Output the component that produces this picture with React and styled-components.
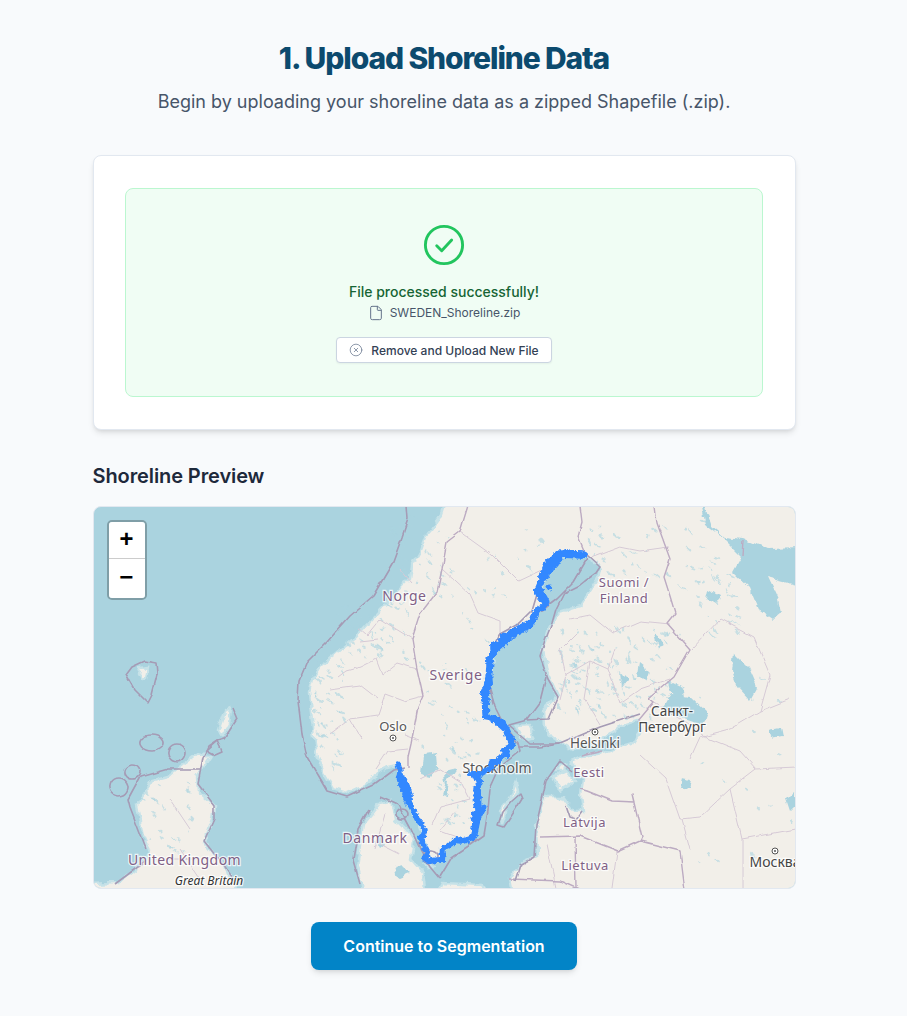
import React from 'react';
import styled, { createGlobalStyle } from 'styled-components';
import { CircleX, File } from 'lucide-react';

const GlobalStyle = createGlobalStyle`
  html, body {
    margin: 0;
    padding: 0;
    background: #f8fafc;
  }
  * { box-sizing: border-box; }
`;

const Page = styled.main`
  width: 888px;
  height: 1016px;
  overflow: hidden;
  padding-top: 40px;
  display: flex;
  flex-direction: column;
  align-items: center;
  font-family: Inter, "Liberation Sans", sans-serif;
`;

const Title = styled.h1`
  margin: 0;
  font-size: 30px;
  line-height: 36px;
  font-weight: 800;
  letter-spacing: -1.12px;
  color: #0c4a6e;
`;

const Subtitle = styled.p`
  margin: 12px 0 0;
  font-size: 18px;
  line-height: 28px;
  color: #475569;
`;

const Content = styled.div`
  width: 703px;
  margin-top: 39px;
`;

const Card = styled.section`
  height: 275px;
  padding: 32px 31.5px;
  background: #fff;
  border: 1px solid #e2e8f0;
  border-radius: 8px;
  box-shadow: 0 4px 6px -1px rgba(0, 0, 0, 0.1), 0 2px 4px -2px rgba(0, 0, 0, 0.1);
`;

const SuccessBox = styled.div`
  height: 209px;
  display: flex;
  flex-direction: column;
  align-items: center;
  padding-top: 33px;
  background: #f0fdf4;
  border: 1px solid #bbf7d0;
  border-radius: 8px;
`;

const SuccessIcon = styled.svg`
  display: block;
  width: 46px;
  height: 46px;
  fill: none;
  stroke: #22c55e;
  stroke-width: 1.5;
  stroke-linecap: round;
  stroke-linejoin: round;
`;

const SuccessText = styled.p`
  margin: 14px 0 0;
  font-size: 14px;
  line-height: 20px;
  font-weight: 500;
  color: #166534;
`;

const FileRow = styled.div`
  display: flex;
  align-items: center;
  gap: 6px;
  margin-top: 3px;
  font-size: 12px;
  line-height: 16px;
  color: #475569;
`;

const FileIcon = styled(File)`
  color: #64748b;
`;

const RemoveButton = styled.button`
  display: flex;
  align-items: center;
  gap: 8px;
  height: 26px;
  margin-top: 16px;
  padding: 0 12px;
  background: #fff;
  border: 1px solid #cbd5e1;
  border-radius: 4px;
  box-shadow: 0 1px 2px rgba(0, 0, 0, 0.05);
  font-family: inherit;
  font-size: 12px;
  font-weight: 500;
  color: #334155;
`;

const RemoveIcon = styled(CircleX)`
  color: #64748b;
`;

const SectionTitle = styled.h2`
  margin: 32px 0 16px;
  font-size: 20px;
  line-height: 28px;
  font-weight: 600;
  letter-spacing: -0.1px;
  color: #1e293b;
`;

const MapFrame = styled.div`
  position: relative;
  height: 383px;
  overflow: hidden;
  background: #aad3df;
  border: 1px solid #e2e8f0;
  border-radius: 8px;
`;

const MapArt = styled.svg`
  display: block;
  width: 100%;
  height: 100%;
`;

const ZoomControl = styled.div`
  position: absolute;
  top: 13px;
  left: 13px;
  display: flex;
  flex-direction: column;
  width: 40px;
  border: 2px solid rgba(0, 0, 0, 0.25);
  border-radius: 5px;
  background-clip: padding-box;
`;

const ZoomButton = styled.span`
  display: flex;
  align-items: center;
  justify-content: center;
  height: ${p => (p.$top ? 37 : 39)}px;
  background: #fff;
  border-bottom: ${p => (p.$top ? '1px solid #ccc' : 'none')};
  border-radius: ${p => (p.$top ? '3px 3px 0 0' : '0 0 3px 3px')};
  font-family: "Liberation Mono", monospace;
  font-size: 24px;
  font-weight: 700;
  color: #000;
`;

const Footer = styled.div`
  display: flex;
  justify-content: center;
  margin-top: 33px;
`;

const ContinueButton = styled.button`
  width: 266px;
  height: 48px;
  background: #0284c7;
  border: none;
  border-radius: 8px;
  box-shadow: 0 4px 6px -1px rgba(0, 0, 0, 0.1), 0 2px 4px -2px rgba(0, 0, 0, 0.1);
  font-family: inherit;
  font-size: 16px;
  font-weight: 600;
  color: #fff;
`;

const MapLabel = styled.text`
  font-family: "Noto Sans", "Open Sans", sans-serif;
  font-size: ${p => p.$size || 13}px;
  font-style: ${p => (p.$italic ? 'italic' : 'normal')};
  letter-spacing: ${p => p.$spacing || 0}px;
  text-anchor: middle;
  fill: ${p => p.$color || '#7f5f85'};
  stroke: rgba(255, 255, 255, 0.75);
  stroke-width: 2.5px;
  paint-order: stroke;
`;

const WATER = '#aad3df';
const LAND = '#f2efe9';
const FRINGE = '#c6e2e8';
const MARITIME = '#a59bb5';
const BORDER = '#bcabc2';
const ADMIN = '#d6cad6';
const ROUTE = '#3388ff';

const mainland =
  'M452 480 L440 518 L432 530 L425 538 L420 552 L412 566 L410 580 L396 594 L382 610 L370 622 L357 637 L338 652 L320 667 L312 680 L309 692 L310 705 L312 722 L314 738 L318 758 L325 776 L333 790 L347 794 L360 788 L372 779 L388 768 L397 766 L402 782 L408 800 L418 822 L424 840 L428 860 L440 860 L444 848 L462 841 L473 838 L478 812 L476 795 L480 778 L492 768 L506 754 L511 744 L505 730 L497 722 L486 716 L484 696 L490 678 L492 656 L505 640 L528 628 L540 608 L541 590 L548 570 L560 556 L587 558 L600 566 L597 580 L580 607 L560 613 L548 632 L543 650 L547 673 L558 697 L543 712 L544 728 L552 738 L573 751 L596 744 L620 728 L637 722 L642 730 L632 745 L603 754 L582 757 L570 762 L584 780 L582 796 L584 812 L573 812 L563 798 L543 798 L537 828 L538 858 L520 866 L510 880 L518 920 L840 920 L840 480 Z';

const whiteSea =
  'M696 480 L712 528 L724 538 L744 540 L768 550 L840 548 L840 596 L768 578 L778 600 L781 614 L772 622 L760 614 L750 590 L733 574 L742 558 L722 538 L706 526 Z';

const islands = [
  // Denmark
  'M381 804 L392 802 L396 820 L408 832 L414 842 L411 860 L423 874 L428 920 L368 920 L357 868 L360 846 L363 826 Z',
  // Scotland and northern England
  'M197 755 L210 758 L197 778 L198 792 L214 806 L212 820 L204 842 L220 862 L236 885 L240 920 L60 920 L60 886 L118 884 L146 862 L149 852 L143 838 L137 806 L153 782 L168 778 Z',
  // Poland
  'M424 920 L442 884 L482 886 L504 920 Z',
  // Gotland, Bornholm
  'M516 783 L510 800 L500 812 L502 824 L508 806 L518 792 Z',
  'M426 865 L431 864 L433 868 L428 869 Z',
  // Saaremaa, Hiiumaa
  'M553 778 L566 772 L574 782 L560 792 Z',
  'M558 766 L566 766 L564 772 L557 772 Z',
  // Orkney
  'M225 712 L231 708 L229 726 L222 738 L218 732 Z',
  // Faroe
  'M141 669 L148 668 L146 680 L142 682 L139 676 Z',
  // Aland
  'M517 728 L528 727 L534 738 L524 741 Z',
];

const bigLakes = [
  'M424 756 L437 754 L438 768 L430 778 L422 776 Z',
  'M447 782 L450 783 L447 797 L443 796 Z',
  'M444 773 L456 770 L452 776 L445 785 Z',
  'M670 695 L690 698 L707 714 L703 726 L684 720 L670 716 L664 706 Z',
  'M734 654 L748 668 L757 688 L750 701 L738 688 L732 672 Z',
  'M668 682 L684 690 L686 704 L672 698 Z',
  'M708 590 L720 596 L716 606 L706 600 Z',
  'M786 800 L794 792 L796 806 L790 812 Z',
  'M770 730 L780 728 L782 738 L772 740 Z',
  'M682 780 L692 782 L690 790 L680 788 Z',
  'M376 842 L382 838 L386 845 L380 850 Z',
  'M395 868 L404 866 L408 876 L398 880 Z',
  'M654 634 L660 638 L664 648 L658 650 Z',
  'M640 664 L650 672 L646 684 L638 676 Z',
  'M620 674 L628 682 L622 690 Z',
];

const maritime = [
  'M405 480 L408 520 L402 538 L393 563 L373 597 L350 617 L327 643 L307 663 L299 682 L298 702 L302 735 L307 758 L327 792 L347 798 L373 786 L393 771 L405 769',
  'M587 556 L600 568 L596 574 L585 582 L580 586 L564 594 L556 610 L552 624 L545 642 L540 658 L548 680 L558 697 L548 720 L526 721 L508 726 L530 745 L560 745 L600 728 L640 715',
  'M548 570 L538 592 L532 612 L520 624 L498 636 L492 652 L487 680 L495 708 L502 722',
  'M540 612 L556 600 L574 582 L587 560',
  'M502 722 L518 744 L520 752 L500 768 L490 790 L488 812 L484 836 L470 846 L452 858 L440 878',
  'M526 721 L540 702 L546 678 M518 748 L540 748 L560 745',
  'M572 772 L560 762 L546 782 L542 800 L536 826 L534 858 L520 866 L515 882',
  'M582 812 L576 820 L570 818 L566 806',
  'M232 708 L237 720 L224 740 L217 742 L208 748 L203 758 L198 785 L214 806 L214 820 L204 842 L220 862 L236 885',
  'M217 742 L222 752 L213 756 L206 752 Z',
  'M145 662 L156 664 L157 676 L152 696 L148 704 L134 690 L126 676 L132 668 Z',
  'M152 752 A12 8 0 1 0 151.9 752 Z',
  'M177 763 A9 9 0 1 0 176.9 763 Z',
  'M119 797 A9 9 0 1 0 118.9 797 Z',
  'M132 780 A8 7 0 1 0 131.9 780 Z',
  'M146 850 L130 808 L128 800 L140 778 L168 770 L200 770',
  'M115 885 L146 862',
  'M369 810 L358 830 L353 860 L360 885',
  'M380 798 L398 806 L410 828 L420 850 L430 868 L440 880',
  'M520 795 L512 802 L502 814 L498 826 L504 828 L512 816 L522 800 Z',
  'M430 864 A8 6 0 1 0 429.9 864 Z',
  'M402 820 A6 5 0 1 0 401.9 820 Z',
];

const borders = [
  'M653 490 L657 524 L670 560 L664 578 L670 597 L675 614 L667 624 L690 650 L674 678 L648 700 L653 704 L638 722',
  'M743 540 L742 556',
  'M582 757 L602 752 M580 790 L587 792 L612 802 L634 803 L632 795 L642 838 L640 842 L618 852 L580 837 L540 838 M640 842 L680 852 L686 900',
  'M578 490 L582 523 L578 538 L586 557',
  'M473 490 L460 533 L447 543 L442 570 L437 593 L420 615 L412 640 L417 670 L423 697 L418 708 L411 745 L408 758 L408 768',
  'M575 838 L576 889 M510 880 L560 882 L600 900',
];

const admin = [
  'M460 533 L492 556 L518 582 L548 568',
  'M442 570 L470 596 L478 614 L500 622 L500 636',
  'M412 640 L380 620 L367 636 L358 628',
  'M417 670 L397 664 L382 676 L376 660 L360 668 L346 672 L338 678',
  'M423 697 L404 702 L385 695 L378 716 L350 720 L362 740',
  'M408 750 L388 752 L376 770 M404 736 L420 742',
  'M420 780 L440 770 L462 784 L470 800 L440 808 L432 826',
  'M456 812 L440 832 L462 840',
  'M588 560 L620 548 L640 552 L668 548',
  'M570 620 L590 616 L612 634 L640 622 L670 625',
  'M576 634 L560 650 L566 676 L590 662 L608 670 L615 650',
  'M608 670 L620 704 L640 690 L670 680 M590 662 L584 700 L600 726',
  'M566 676 L560 700',
  'M692 650 L720 620 L754 638 L770 676 L760 712 L730 730 L700 738 L690 760',
  'M647 700 L680 720 L710 740 L740 752 L756 770 L730 790 L700 818 L680 820 L666 780 L640 756',
  'M760 712 L790 700 M756 770 L796 768 M730 790 L742 840 L742 889',
  'M682 820 L690 850 M742 840 L796 830',
  'M547 845 L556 889 M617 852 L612 889 M585 865 L610 870',
  'M400 570 L412 584 M360 642 L378 640 M330 690 L360 686 L378 700 M350 720 L330 735',
  'M170 800 L190 830 M150 860 L200 860 M180 850 L200 880',
  'M370 840 L400 855 M385 815 L375 850',
];

function scatter(seed, count, x, y, w, h, maxR) {
  let s = seed;
  const next = () => {
    s = (s * 16807) % 2147483647;
    return s / 2147483647;
  };
  return Array.from({ length: count }, () => ({
    cx: x + next() * w,
    cy: y + next() * h,
    rx: 0.6 + next() * maxR,
    ry: 0.5 + next() * 0.9,
    rot: 20 + next() * 50,
  }));
}

const ponds = [
  ...scatter(11, 34, 440, 530, 110, 120, 3),
  ...scatter(23, 34, 420, 660, 70, 100, 3.5),
  ...scatter(37, 130, 560, 630, 110, 90, 3.5),
  ...scatter(41, 26, 590, 520, 80, 60, 3.5),
  ...scatter(53, 40, 680, 520, 60, 120, 4),
  ...scatter(71, 20, 440, 770, 30, 60, 2.5),
  ...scatter(83, 16, 700, 680, 96, 200, 2.5),
  // fjords along the Norwegian and Scottish coasts
  ...scatter(97, 36, 390, 510, 60, 90, 4),
  ...scatter(101, 44, 340, 600, 70, 60, 4),
  ...scatter(113, 46, 312, 660, 34, 110, 4),
  ...scatter(127, 32, 142, 785, 50, 70, 3.5),
];

// blue shoreline, south end first
const routeWest =
  'M398 765 L400 772 L399 778 L402 781 L401 786 L405 787 L404 792 L407 793 L406 798 L409 800 L408 804 L411 807 L414 813 L417 820 L422 826 L425 832 L423 837 L420 838 L423 844 L425 850 L428 855 L424 860 L430 862 L437 861 L442 861';
const routeEast =
  'M442 861 L443 849 L450 846 L456 841 L463 842 L469 840 L474 836 L476 826 L474 815 L479 812 L476 806 L479 798 L477 790 L480 783 L477 778 L471 775 L480 775 L487 771 L491 769 L492 763 L497 763 L501 758 L508 755 L504 751 L512 747 L512 740 L508 737 L506 730 L502 723 L494 720 L486 717 L485 708 L487 700 L483 698 L484 692 L490 684 L489 676 L490 664 L488 661 L494 655 L493 646 L500 644 L503 637 L511 636 L516 631 L526 628 L533 621 L536 612 L543 608 L546 604 L540 598 L537 592 L540 585 L543 578 L544 573 L551 570 L549 563 L556 566 L559 556 L566 553 L575 555 L585 556';

const Wobble = ({ id, freq, scale, seed, blur }) => (
  <filter id={id} filterUnits="userSpaceOnUse" x="60" y="470" width="800" height="480">
    <feTurbulence type="fractalNoise" baseFrequency={freq} numOctaves="3" seed={seed} result="noise" />
    <feDisplacementMap in="SourceGraphic" in2="noise" scale={scale} xChannelSelector="R" yChannelSelector="G" />
    <feGaussianBlur stdDeviation={blur} />
  </filter>
);

const City = ({ x, y }) => (
  <g>
    <circle cx={x} cy={y} r="3" fill="#fff" stroke="#555" />
    <circle cx={x} cy={y} r="1" fill="#555" />
  </g>
);

const App = () => {
  return (
    <>
      <GlobalStyle />
      <Page>
        <Title>1. Upload Shoreline Data</Title>
        <Subtitle>Begin by uploading your shoreline data as a zipped Shapefile (.zip).</Subtitle>
        <Content>
          <Card>
            <SuccessBox>
              <SuccessIcon viewBox="0 0 24 24">
                <circle cx="12" cy="12" r="9.7" />
                <path d="M8.2 12.4 L10.8 15 L16 9.4" />
              </SuccessIcon>
              <SuccessText>File processed successfully!</SuccessText>
              <FileRow>
                <FileIcon size={16} strokeWidth={1.5} />
                SWEDEN_Shoreline.zip
              </FileRow>
              <RemoveButton>
                <RemoveIcon size={14} strokeWidth={1.25} />
                Remove and Upload New File
              </RemoveButton>
            </SuccessBox>
          </Card>
          <SectionTitle>Shoreline Preview</SectionTitle>
          <MapFrame>
            <MapArt viewBox="94 508 701 381" preserveAspectRatio="none">
              <defs>
                <Wobble id="coast" freq="0.09" scale="8" seed="4" blur="0.5" />
                <Wobble id="lines" freq="0.06" scale="4" seed="9" blur="0.35" />
                <Wobble id="trace" freq="0.3" scale="4.5" seed="2" blur="0.25" />
              </defs>
              <g filter="url(#coast)">
                <path d={mainland} fill={LAND} stroke={FRINGE} strokeWidth="2.5" />
                {islands.map((d, i) => (
                  <path key={i} d={d} fill={LAND} stroke={FRINGE} strokeWidth="2.5" />
                ))}
                <path d={whiteSea} fill={WATER} />
                {bigLakes.map((d, i) => (
                  <path key={i} d={d} fill={WATER} />
                ))}
                {ponds.map((p, i) => (
                  <ellipse
                    key={i}
                    cx={p.cx}
                    cy={p.cy}
                    rx={p.rx}
                    ry={p.ry}
                    fill={WATER}
                    opacity="0.6"
                    transform={`rotate(${p.rot} ${p.cx} ${p.cy})`}
                  />
                ))}
              </g>
              <g filter="url(#lines)" fill="none" strokeLinejoin="round">
                <g stroke={ADMIN} strokeWidth="1">
                  {admin.map((d, i) => (
                    <path key={i} d={d} />
                  ))}
                </g>
                <g stroke={BORDER} strokeWidth="1.4">
                  {borders.map((d, i) => (
                    <path key={i} d={d} />
                  ))}
                </g>
                <g stroke={MARITIME} strokeWidth="1.6">
                  {maritime.map((d, i) => (
                    <path key={i} d={d} />
                  ))}
                </g>
              </g>

              <MapLabel x="404.5" y="602" $size={14} $spacing={0.6}>Norge</MapLabel>
              <MapLabel x="456" y="681" $size={14} $spacing={0.6}>Sverige</MapLabel>
              <MapLabel x="624" y="588" $size={13} $spacing={0.5}>Suomi /</MapLabel>
              <MapLabel x="624" y="604" $size={13} $spacing={0.5}>Finland</MapLabel>
              <MapLabel x="589" y="778" $size={13} $spacing={0.5}>Eesti</MapLabel>
              <MapLabel x="584.5" y="828" $size={13} $spacing={0.5}>Latvija</MapLabel>
              <MapLabel x="585" y="871" $size={13} $spacing={0.5}>Lietuva</MapLabel>
              <MapLabel x="375" y="844" $size={14} $spacing={0.6}>Danmark</MapLabel>
              <MapLabel x="184.5" y="866" $size={14} $spacing={0.4}>United Kingdom</MapLabel>
              <MapLabel x="209" y="886" $size={12} $italic $color="#333">Great Britain</MapLabel>
              <MapLabel x="393" y="732" $color="#555">Oslo</MapLabel>
              <City x={393} y={739} />
              <MapLabel x="595" y="749" $size={13.5} $color="#555">Helsinki</MapLabel>
              <City x={595} y={733} />
              <MapLabel x="672" y="717" $size={13.5} $color="#444">Санкт-</MapLabel>
              <MapLabel x="672" y="733" $size={13.5} $color="#444">Петербург</MapLabel>
              <MapLabel x="775" y="868" $size={14} $color="#444">Москва</MapLabel>
              <City x={775} y={852} />
              <MapLabel x="497" y="774" $size={14} $color="#555">Stockholm</MapLabel>

              <g filter="url(#trace)" fill="none" stroke={ROUTE} strokeLinejoin="round" strokeLinecap="round">
                <path d={routeWest} strokeWidth="5.5" />
                <path d="M402 781 L406 790 L408 798" strokeWidth="10" />
                <path d={routeEast} strokeWidth="6" />
                <path d="M484 808 L478 820 L473 838" strokeWidth="5" />
                <path d="M477 790 L478 812 L474 836" strokeWidth="7.5" />
                <path d="M486 717 L485 700 L489 676 L490 664" strokeWidth="7" />
                <path d="M494 720 L506 730 L512 744" strokeWidth="7" />
                <path d="M495 650 L510 636 L530 625 M545 603 L539 592" strokeWidth="9" />
                <path d="M543 578 L549 566 L558 557" strokeWidth="10" />
                <path d="M559 555 L582 556" strokeWidth="7.5" />
                <path d="M549 588 L549.5 589" strokeWidth="5" />
              </g>
            </MapArt>
            <ZoomControl>
              <ZoomButton $top>+</ZoomButton>
              <ZoomButton>−</ZoomButton>
            </ZoomControl>
          </MapFrame>
          <Footer>
            <ContinueButton>Continue to Segmentation</ContinueButton>
          </Footer>
        </Content>
      </Page>
    </>
  );
};

export default App;
